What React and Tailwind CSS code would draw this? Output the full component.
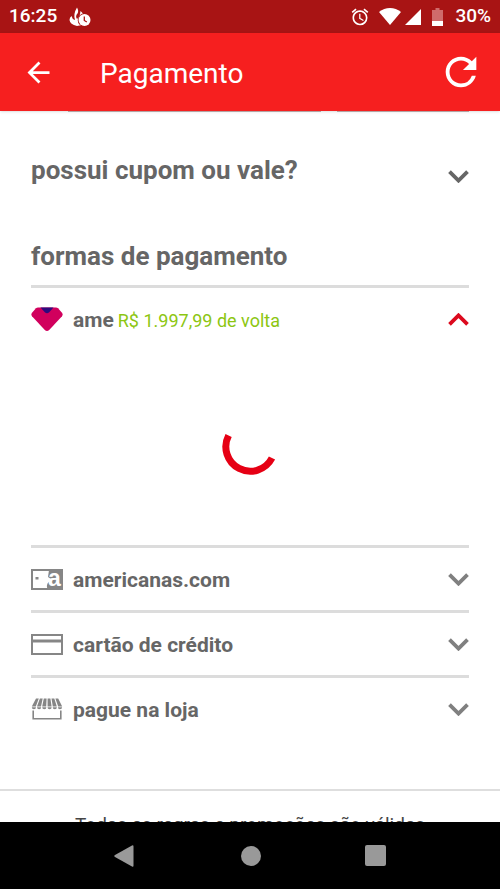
import { useState } from 'react';
import { MdArrowBack, MdRefresh, MdAlarm } from 'react-icons/md';

function Chevron({ open, className }) {
  return (
    <svg viewBox="0 0 21 13" className={`h-[13px] w-[21px] shrink-0 ${className}`} fill="none" aria-hidden="true">
      <path d={open ? 'M1.5 11.3 10.5 2.4 19.5 11.3' : 'M1.5 1.7 10.5 10.6 19.5 1.7'} stroke="currentColor" strokeWidth="3.8" />
    </svg>
  );
}

function AmeIcon() {
  return (
    <svg viewBox="0 0 32 25" className="h-[25px] w-8" aria-hidden="true">
      <path d="M7 .5h18q1.2 0 2 .8l4 4.4q1.4 1.8 0 3.5L18.2 23q-2.2 2-4.4 0L1 9.2q-1.4-1.7 0-3.5L5 1.3Q5.8.5 7 .5z" fill="#d1005d" />
      <path d="M9.5.5h13l-4.3 4.800q-2.200 2-4.400 0z" fill="#2d0a7d" />
    </svg>
  );
}

function GiftCardIcon() {
  return (
    <svg viewBox="0 0 32 21" className="h-[21px] w-8 overflow-visible" aria-hidden="true">
      <rect x="1" y="1" width="30" height="19" fill="#fff" stroke="#868686" strokeWidth="2" />
      <path d="M18 1h13v19H17q-2-2-.5-5.500 1.500-3 5-3.500L17 8z" fill="#868686" />
      <rect x="4.5" y="8" width="3" height="2.500" fill="#868686" />
      <text x="17" y="17" fontFamily="Liberation Sans, sans-serif" fontSize="23" fontWeight="700" fill="#fff">a</text>
    </svg>
  );
}

function CreditCardIcon() {
  return (
    <svg viewBox="0 0 32 21" className="h-[21px] w-8" fill="none" stroke="#868686" aria-hidden="true">
      <rect x="1" y="1" width="30" height="19" strokeWidth="2" />
      <path d="M1 7h30" strokeWidth="3" />
    </svg>
  );
}

function StoreIcon() {
  return (
    <svg viewBox="0 0 32 22" className="h-[22px] w-8" fill="#868686" aria-hidden="true">
      <path d="M5 .5h2.800L4.800 8.500H.8zM8.900.5h2.800L10 8.500H6zM12.800.5h2.800L15.200 8.500h-4zM16.600.5h2.800l1.200 8h-4zM20.500.5h2.800l2.500 8h-4zM24.400.5h2.800l4 8h-4z" />
      <path d="M.8 9.200h4.200q0 2-2.100 2T.8 9.200zM6 9.200h4.200q0 2-2.100 2T6 9.200zM11.200 9.200h4.200q0 2-2.100 2t-2.100-2zM16.500 9.200h4.200q0 2-2.100 2t-2.100-2zM21.700 9.200h4.200q0 2-2.100 2t-2.100-2zM26.900 9.200h4.200q0 2-2.100 2t-2.100-2z" />
      <path d="M2.200 12.500v8.300h27.600v-8.300" fill="none" stroke="#868686" strokeWidth="1.6" />
    </svg>
  );
}

function Spinner() {
  return (
    <svg viewBox="0 0 56 56" className="size-14" fill="none" role="status" aria-label="carregando">
      <path d="M6.600 15.500A24 24 0 1 0 50 38" stroke="#e60014" strokeWidth="7" />
    </svg>
  );
}

function StatusBar() {
  return (
    <div className="flex h-[33px] shrink-0 items-center justify-between bg-[#a81414] px-[9px] text-[19px] font-medium text-white">
      <div className="flex items-center gap-3">
        <span>16:25</span>
        <svg viewBox="0 0 22 20" className="h-5 w-[22px]" aria-hidden="true">
          <path d="M8 .5q2 3.500.5 6Q6 9 8 12q3-2 3.500-8 4 3 3.500 8l-2 6-5 1Q1 17.500.5 13q0-2.500 2-4Q3 12 6 13 4 7 8 .5z" fill="#fff" />
          <circle cx="15.5" cy="13" r="6.8" fill="#a81414" />
          <circle cx="15.5" cy="13" r="6" fill="#fff" />
          <path d="M15.300 9.500v4l2.500 1.500" stroke="#a81414" strokeWidth="1.3" fill="none" />
        </svg>
      </div>
      <div className="flex items-center">
        <MdAlarm className="size-5" />
        <svg viewBox="0 0 22 17" className="ml-[9px] h-[17px] w-[22px]" fill="currentColor" aria-hidden="true">
          <path d="M0 4Q5 0 11 0t11 4L11 17z" />
        </svg>
        <svg viewBox="0 0 16 16" className="ml-1 size-4" fill="currentColor" aria-hidden="true">
          <path d="M16 0v16H0z" />
        </svg>
        <svg viewBox="0 0 11 18" className="ml-[11px] mr-3 h-[18px] w-[11px]" aria-hidden="true">
          <path d="M3.500 0h4v2H11v11H0V2h3.500z" fill="#cf6b6b" />
          <path d="M0 13h11v5H0z" fill="#fff" />
        </svg>
        <span>30%</span>
      </div>
    </div>
  );
}

const methods = [
  { id: 'ame', label: 'ame', cashback: 'R$ 1.997,99 de volta', Icon: AmeIcon },
  { id: 'americanas', label: 'americanas.com', Icon: GiftCardIcon },
  { id: 'credito', label: 'cartão de crédito', Icon: CreditCardIcon },
  { id: 'loja', label: 'pague na loja', Icon: StoreIcon },
];

function PaymentMethod({ method, open, onToggle }) {
  const { label, cashback, Icon } = method;
  return (
    <li className="border-t-3 border-[#dcdcdc]">
      <button type="button" aria-expanded={open} onClick={onToggle} className="flex h-[62px] w-full items-center text-left">
        <Icon />
        <span className="ml-[10px] pt-[3px] text-[21px] font-bold text-[#666]">{label}</span>
        {cashback && <span className="ml-1 pt-[3px] text-lg text-[#8cc611]">{cashback}</span>}
        <Chevron open={open} className={open ? 'ml-auto text-[#dc0a1e]' : 'ml-auto text-[#808080]'} />
      </button>
      {open && (
        <div className="flex h-[195px] items-center justify-center">
          <Spinner />
        </div>
      )}
    </li>
  );
}

export default function App() {
  const [selected, setSelected] = useState('ame');

  return (
    <div className="flex h-screen flex-col overflow-hidden bg-white font-['Roboto',sans-serif]">
      <StatusBar />
      <header className="z-10 flex h-[78px] shrink-0 items-center bg-[#f61f1f] pr-4 pl-[22px] text-white shadow-sm">
        <button type="button" aria-label="voltar">
          <MdArrowBack className="size-[33px]" />
        </button>
        <h1 className="mt-[3px] ml-[45px] text-[28px]">Pagamento</h1>
        <button type="button" aria-label="recarregar" className="ml-auto">
          <MdRefresh className="size-[46px]" />
        </button>
      </header>

      <main className="min-h-0 flex-1 overflow-hidden">
        <div className="px-[31px]">
          <div className="grid grid-cols-[21fr_11fr] gap-4 pl-[37px]">
            <div className="border-b border-[#c8b4b4]" />
            <div className="border-b border-[#c8b4b4]" />
          </div>
          <button type="button" className="mt-[38px] flex h-10 w-full items-center justify-between text-left text-[#666]">
            <span className="text-[26px] font-bold">possui cupom ou vale?</span>
            <Chevron className="mt-3" />
          </button>
          <h2 className="mt-[46px] h-[49px] text-[26px] leading-10 font-bold text-[#666]">formas de pagamento</h2>
          <ul>
            {methods.map((method) => (
              <PaymentMethod
                key={method.id}
                method={method}
                open={selected === method.id}
                onToggle={() => setSelected(selected === method.id ? null : method.id)}
              />
            ))}
          </ul>
        </div>
        <footer className="mt-[49px] border-t-2 border-[#dedede] px-16 pt-5 text-center text-[19px] leading-7 text-[#444]">
          Todas as regras e promoções são válidas
        </footer>
      </main>

      <nav className="flex h-[67px] shrink-0 items-center justify-between bg-black px-[114px] text-[#999]">
        <button type="button" aria-label="voltar tela">
          <svg viewBox="0 0 22 24" className="h-6 w-[22px]" fill="currentColor" aria-hidden="true">
            <path d="M18 1.500q1.500-.8 1.500 1v19q0 1.800-1.500 1L1 13q-1.500-1 0-2z" />
          </svg>
        </button>
        <button type="button" aria-label="início" className="size-5 rounded-full bg-current" />
        <button type="button" aria-label="recentes" className="size-[21px] rounded-xs bg-current" />
      </nav>
    </div>
  );
}
